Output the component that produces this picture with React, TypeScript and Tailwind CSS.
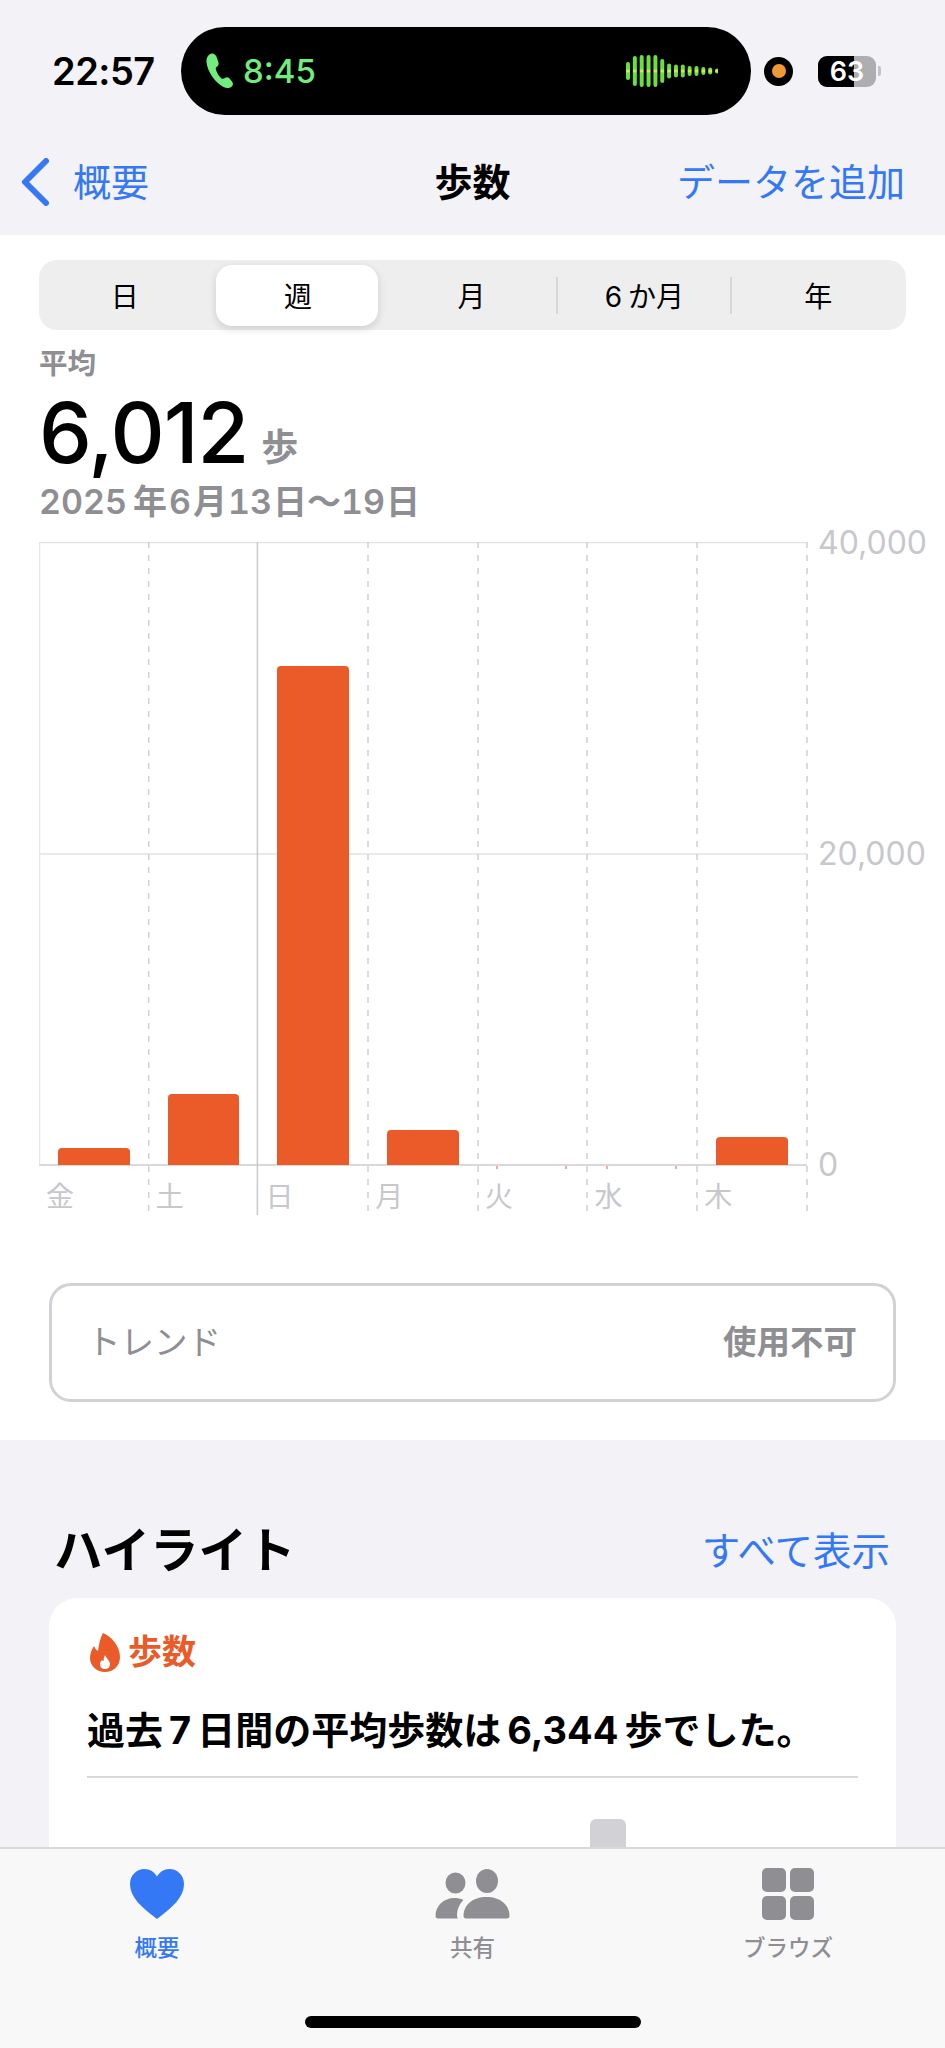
const font = { fontFamily: '"Inter", "Noto Sans CJK JP", sans-serif' };

const tabs = ['日', '週', '月', '6か月', '年'];
const days = ['金', '土', '日', '月', '火', '水', '木'];
const bars = [17, 71, 499, 35, 0, 0, 28];
const wave = [18, 30, 32, 32, 32, 24, 15, 13, 13, 10, 10, 8, 7, 5];

function PhoneIcon() {
  return (
    <svg width="28" height="36" viewBox="0 0 28 36" className="mr-[9px] shrink-0">
      <path
        d="M5 .8C7.500 0 10 2 11 5l1.500 4.500C13 11.500 12 13 10.500 14c-1 .7-.8 2-.3 3.500 1.300 3.500 3.300 6.500 5.300 8 1 .7 2.300.3 3.500-.5 1.500-1 3-1 4.500.5l2.500 3c1.500 2 1 4-.5 5.200-2 1.600-5 1.800-8 .3C9 29.500 1.500 19 .5 9 .2 5 2 2 5 .8Z"
        fill="#72ec7c"
      />
    </svg>
  );
}

function Wave() {
  return (
    <svg width="92" height="36" viewBox="0 0 92 36">
      <defs>
        <linearGradient id="wavefill" gradientUnits="userSpaceOnUse" x1="0" y1="0" x2="0" y2="36">
          <stop offset="0.44" stopColor="#69e03f" />
          <stop offset="0.5" stopColor="#e6f04a" />
          <stop offset="0.56" stopColor="#69e03f" />
        </linearGradient>
      </defs>
      {wave.map((h, i) => (
        <rect key={i} x={i * 6.85} y={18 - h / 2} width="4" height={h} rx="2" fill="url(#wavefill)" />
      ))}
    </svg>
  );
}

function Battery() {
  return (
    <div className="relative ml-[25px] flex h-[31px] w-[58px] items-center justify-center overflow-hidden rounded-[9px] bg-[#aeaeb2]">
      <div className="absolute inset-y-0 left-0 w-[36px] bg-black" />
      <span className="relative text-[27px] leading-none font-semibold text-white">63</span>
    </div>
  );
}

function StatusBar() {
  return (
    <div className="flex h-[142px] items-start pt-[27px]">
      <div className="flex h-[88px] items-center">
        <span className="ml-[52px] w-[129px] text-[38px] leading-none font-semibold tracking-[-0.5px] text-black">22:57</span>
        <div className="flex h-[88px] w-[570px] items-center rounded-[44px] bg-black pr-[33px] pl-[25px]">
          <PhoneIcon />
          <span className="text-[33px] leading-none font-medium text-[#72ec7c]">8:45</span>
          <div className="ml-auto flex">
            <Wave />
          </div>
        </div>
        <div className="ml-[13px] flex h-[29px] w-[29px] items-center justify-center rounded-full bg-black">
          <div className="h-[14px] w-[14px] rounded-full bg-[#f09a37]" />
        </div>
        <Battery />
        <div className="ml-[2px] h-[10px] w-[3px] rounded-r-[2px] bg-[#c4c4c8]" />
      </div>
    </div>
  );
}

function NavBar() {
  return (
    <div className="relative flex h-[93px] items-center pb-[13px]">
      <svg width="28" height="48" viewBox="0 0 28 48" className="ml-[21px]">
        <path d="M25 3 4 24l21 21" fill="none" stroke="#3478f6" strokeWidth="6" strokeLinecap="round" strokeLinejoin="round" />
      </svg>
      <span className="ml-[24px] text-[38px] leading-none text-[#3478f6]">概要</span>
      <span className="absolute inset-0 flex items-center justify-center pb-[13px] text-[38px] leading-none font-bold text-black">歩数</span>
      <span className="mr-[40px] ml-auto text-[38px] leading-none text-[#3478f6]">データを追加</span>
    </div>
  );
}

function Segments() {
  return (
    <div className="mx-[39px] grid h-[70px] grid-cols-5 items-center rounded-[18px] bg-[#eeeeef]">
      {tabs.map((t, i) => (
        <div key={t} className="relative flex h-[61px] items-center justify-center pt-[3px]">
          {i === 1 && <div className="absolute inset-y-0 left-[4px] w-[162px] rounded-[16px] bg-white shadow-[0_3px_8px_rgba(0,0,0,0.14)]" />}
          {t === '6か月' ? (
            <span className="relative mr-[3px] text-[28px] leading-none text-black">
              <span className="mr-[6px]">6</span>か月
            </span>
          ) : (
            <span className="relative mr-[2px] text-[28px] leading-none text-black">{t}</span>
          )}
          {(i === 2 || i === 3) && <div className="absolute top-[12px] right-[1px] h-[37px] w-[2px] bg-[#d6d6d9]" />}
        </div>
      ))}
    </div>
  );
}

function Chart() {
  const xs = [0, 109.7, 218.4, 329, 439, 548, 658, 768];
  return (
    <div className="relative mt-[20px] ml-[39px] flex h-[673px] w-[906px]">
      <svg width="770" height="673" viewBox="0 0 770 673" className="absolute top-0 left-0">
        <line x1="0" y1="0.5" x2="768" y2="0.5" stroke="#e2e2e4" strokeWidth="1.500" />
        <line x1="0" y1="312" x2="768" y2="312" stroke="#e2e2e4" strokeWidth="1.500" />
        <line x1="0" y1="623" x2="768" y2="623" stroke="#d9d9dc" strokeWidth="2" />
        <line x1="0.5" y1="0" x2="0.5" y2="623" stroke="#e6e6e8" strokeWidth="1.500" />
        {xs.slice(1).map((x, i) =>
          i === 1 ? (
            <line key={x} x1={x} y1="0" x2={x} y2="673" stroke="#c9c9cd" strokeWidth="1.500" />
          ) : (
            <line key={x} x1={x} y1="0" x2={x} y2="673" stroke="#d0d0d4" strokeWidth="1.500" strokeDasharray="6 7" />
          ),
        )}
        {[458, 527, 568, 637].map((x) => (
          <line key={x} x1={x} y1="624" x2={x} y2="627" stroke="#eb5a29" strokeWidth="1" />
        ))}
      </svg>
      <div className="relative flex w-[768px] flex-col">
        <div className="flex h-[623px]">
          {bars.map((h, i) => (
            <div key={i} className="flex flex-1 items-end px-[19px]">
              <div className="w-full rounded-t-[4px] bg-[#eb5a29]" style={{ height: h }} />
            </div>
          ))}
        </div>
        <div className="flex pt-[15px]">
          {days.map((d) => (
            <div key={d} className="flex-1 pl-[7px] text-[28px] leading-[34px] text-[#c7c7cc]">
              {d}
            </div>
          ))}
        </div>
      </div>
      <div className="ml-[11px] flex h-[623px] flex-col justify-between pt-[1px] text-[32px] text-[#c7c7cc]">
        <div className="flex h-0 items-center">40,000</div>
        <div className="flex h-0 items-center">20,000</div>
        <div className="flex h-0 items-center">0</div>
      </div>
    </div>
  );
}

function StepsPanel() {
  return (
    <div className="bg-white pt-[25px] pb-[38px]">
      <Segments />
      <div className="mt-[16px] ml-[39px] flex h-[36px] items-center text-[28.500px] leading-none font-semibold text-[#8e8e93]">平均</div>
      <div className="mt-[7px] ml-[39px] flex h-[88px] items-center">
        <span className="text-[84px] leading-none font-medium tracking-[-1px] text-black">6,012</span>
        <span className="mt-[28px] ml-[13px] text-[37px] leading-none font-bold text-[#8e8e93]">歩</span>
      </div>
      <div className="mt-[5px] ml-[39px] flex h-[40px] items-center text-[34px] leading-none font-semibold text-[#8e8e93] tabular-nums">
        <span className="mr-[6px]">2025</span>年<span className="mx-[2px]">6</span>月<span className="mx-[1px]">13</span>日〜<span className="mr-[1px]">19</span>日
      </div>
      <Chart />
      <div className="mx-[49px] mt-[68px] flex h-[119px] items-center justify-between rounded-[22px] border-[3px] border-[#d1d1d6] pr-[36px] pl-[35px]">
        <span className="text-[33.500px] leading-none text-[#8e8e93]">トレンド</span>
        <span className="text-[33.500px] leading-none font-semibold text-[#8e8e93]">使用不可</span>
      </div>
    </div>
  );
}

function Highlights() {
  return (
    <div className="pt-[80px]">
      <div className="mr-[55px] ml-[54px] flex h-[62px] items-center justify-between">
        <span className="text-[48.500px] leading-none font-bold text-black">ハイライト</span>
        <span className="text-[38.500px] leading-none text-[#3478f6]">すべて表示</span>
      </div>
      <div className="mx-[49px] mt-[16px] h-[420px] rounded-[28px] bg-white px-[38px] pt-[34px]">
        <div className="flex h-[40px] items-center">
          <svg width="32" height="40" viewBox="0 0 32 40" className="ml-[2px]">
            <path d="M14 1c8 3 17 13 17 24 0 9-7 15-15 15S1 34 1 26c0-5 2-9 4-12 1 2 2 4 4 5C10 12 11 6 14 1Z" fill="#eb5a29" />
            <path d="M16 23c2 4 5 6 5 9s-2 5-5 5-5-2-5-5c0-2 1-3 2-4 .5 1 1 1 1.500 1 0-2 .5-4 1.500-6Z" fill="#fff" />
          </svg>
          <span className="ml-[7px] text-[34px] leading-none font-bold text-[#eb5a29]">歩数</span>
        </div>
        <div className="mt-[36px] flex h-[44px] items-center text-[38px] leading-none font-bold whitespace-nowrap text-black">
          過去<span className="mx-[6px]">7</span>日間の平均歩数は<span className="mx-[6px]">6,344</span>歩でした。
        </div>
        <div className="mt-[24px] h-[2px] bg-[#d8d8dc]" />
        <div className="mt-[41px] ml-[503px] h-[60px] w-[36px] rounded-t-[6px] bg-[#d1d1d6]" />
      </div>
    </div>
  );
}

function TabBar() {
  return (
    <div className="absolute inset-x-0 bottom-0 h-[201px] border-t-2 border-[#d8d8dc] bg-[#f8f8f9]">
      <div className="flex h-[120px] pt-[19px]">
        <div className="flex w-[314px] flex-col items-center">
          <svg width="56" height="52" viewBox="0 0 56 52" className="h-[52px]">
            <path d="M28 51C12 39 1 29 1 16 1 7 8 1 15.500 1 21 1 25.500 4 28 8.500 30.500 4 35 1 40.500 1 48 1 55 7 55 16c0 13-11 23-27 35Z" fill="#3478f6" />
          </svg>
          <span className="mt-[17px] text-[22.500px] leading-none font-medium text-[#3478f6]">概要</span>
        </div>
        <div className="flex w-[317px] flex-col items-center">
          <svg width="76" height="52" viewBox="0 0 76 52" className="h-[52px]">
            <ellipse cx="20.500" cy="15" rx="10" ry="10.500" fill="#8e8e93" />
            <ellipse cx="52" cy="13" rx="11" ry="12" fill="#8e8e93" />
            <path d="M.5 48c0-10 8-18 19-18 3 0 6 .5 9 2-4 4-6.500 9.500-6.500 15.500 0 1 .3 2 .8 3H3c-1.500 0-2.500-1-2.500-2.500Z" fill="#8e8e93" />
            <path d="M31 50.500c-1.500 0-2.500-1-2.500-2.500 0-11 9-19 23-19s23 8 23 19c0 1.500-1 2.500-2.500 2.500H31Z" fill="#8e8e93" />
          </svg>
          <span className="mt-[17px] text-[22.500px] leading-none font-medium text-[#8e8e93]">共有</span>
        </div>
        <div className="flex w-[314px] flex-col items-center">
          <div className="grid h-[52px] grid-cols-[24px_24px] grid-rows-[24px_24px] gap-[4px]">
            <div className="rounded-[5px] bg-[#8e8e93]" />
            <div className="rounded-[5px] bg-[#8e8e93]" />
            <div className="rounded-[5px] bg-[#8e8e93]" />
            <div className="rounded-[5px] bg-[#8e8e93]" />
          </div>
          <span className="mt-[17px] text-[22.500px] leading-none font-medium text-[#8e8e93]">ブラウズ</span>
        </div>
      </div>
      <div className="mx-auto mt-[47px] h-[12px] w-[336px] rounded-full bg-black" />
    </div>
  );
}

export default function App() {
  return (
    <div className="relative h-[2048px] w-[945px] overflow-hidden bg-[#f2f2f7]" style={font}>
      <StatusBar />
      <NavBar />
      <StepsPanel />
      <Highlights />
      <TabBar />
    </div>
  );
}
